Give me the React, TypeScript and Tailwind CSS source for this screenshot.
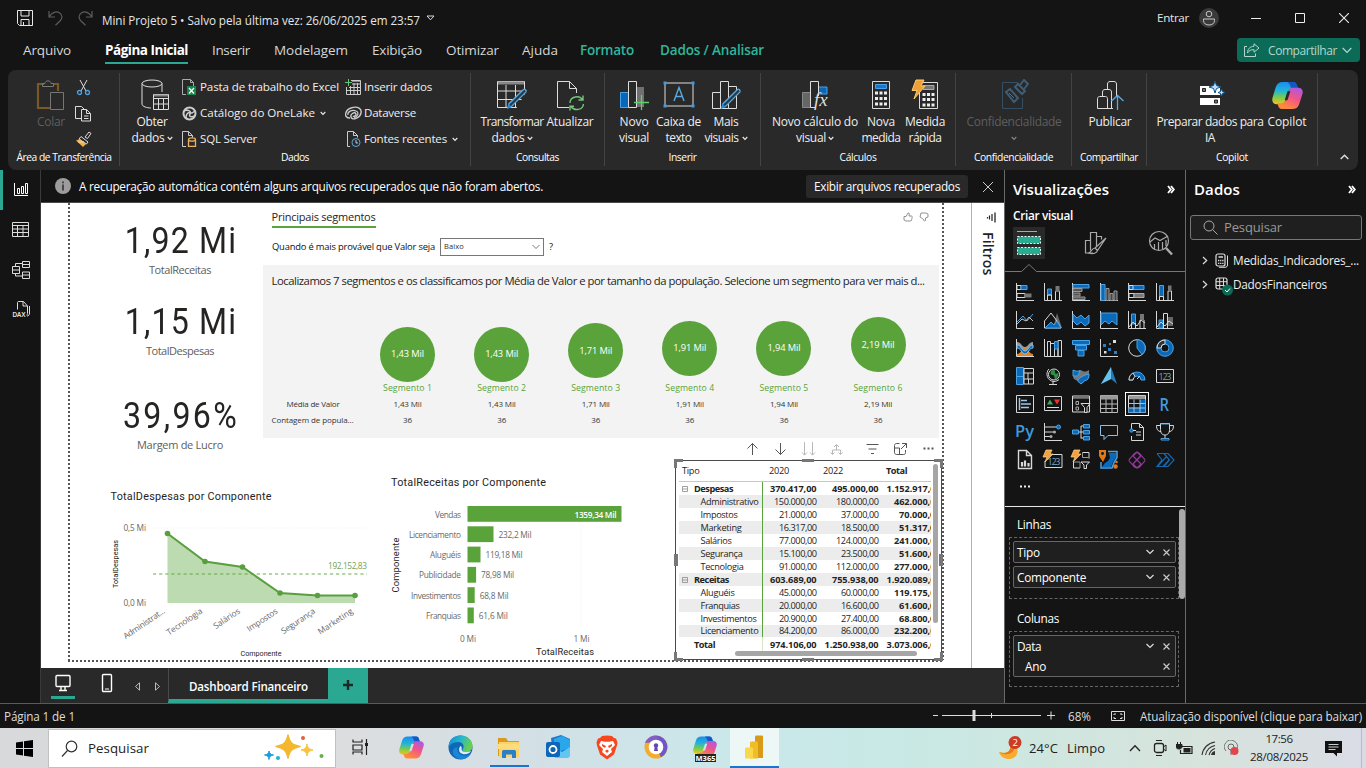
import { useLayoutEffect, useRef, useState } from "react";
import type { ReactNode } from "react";

type TProps = { w: number; className?: string; children: string };

/* Single line of text, tracked so that it fills the given width. */
function T({ w, className = "", children }: TProps) {
  const ref = useRef<HTMLSpanElement>(null);
  const [ls, setLs] = useState(0);
  useLayoutEffect(() => {
    const el = ref.current;
    if (!el) return;
    const prev = el.style.letterSpacing;
    el.style.letterSpacing = "0px";
    const natural = parseFloat(getComputedStyle(el).width);
    el.style.letterSpacing = prev;
    setLs((w - natural) / children.length);
  }, [w, children]);
  return (
    <span ref={ref} style={{ letterSpacing: ls }} className={`inline-block w-max shrink-0 whitespace-nowrap ${className}`}>
      {children}
    </span>
  );
}

function Svg({ w, h, className = "", children }: { w: number; h: number; className?: string; children: ReactNode }) {
  return (
    <svg width={w} height={h} viewBox={`0 0 ${w} ${h}`} fill="none" className={`shrink-0 ${className}`}>
      {children}
    </svg>
  );
}

function Chevron({ className = "" }: { className?: string }) {
  return (
    <Svg w={6} h={5} className={className}>
      <path d="M.7 1 3 3.4 5.3 1" stroke="currentColor" strokeWidth="1.1" />
    </Svg>
  );
}

/* ---------- title bar and menu ---------- */

function TitleBar() {
  return (
    <div className="flex h-[35px] shrink-0 items-center text-[#e6e6e6]">
      <Svg w={16} h={16} className="ml-[17px]">
        <path d="M.5.5h15v15h-13l-2-2zM4 .5v5.500h8v-5.500M4 15.500v-6h8v6M6.500 15v-3" stroke="#e8e8e8" />
      </Svg>
      <Svg w={16} h={16} className="ml-[15px]">
        <path d="M1 1v6h6M1.300 6.500C4 2.500 8 .8 11 2.500c4 2.500 3.500 6 1 8.500l-4.500 4.300" stroke="#5c5c5c" strokeWidth="1.200" />
      </Svg>
      <Svg w={16} h={16} className="ml-[13px]">
        <path d="M15 1v6H9M14.700 6.500C12 2.500 8 .8 5 2.500c-4 2.500-3.500 6-1 8.500l4.500 4.300" stroke="#5c5c5c" strokeWidth="1.200" />
      </Svg>
      <T w={318} className="mt-[6px] ml-[9px] text-[11.7px]">Mini Projeto 5 • Salvo pela última vez: 26/06/2025 em 23:57</T>
      <Svg w={9} h={6} className="ml-[6px]">
        <path d="M1 1h7L4.500 4.800z" stroke="#d8d8d8" />
      </Svg>
      <div className="ml-auto flex items-center">
        <T w={32} className="text-[11.6px]">Entrar</T>
        <div className="ml-[10px] flex size-[20px] items-center justify-center rounded-full bg-[#3a3a3a]">
          <Svg w={14} h={16}>
            <circle cx="7" cy="4" r="2.800" stroke="#c8c8c8" />
            <path d="M1.500 9h11v1.500c0 3-2.500 4.500-5.500 4.500s-5.500-1.500-5.500-4.500z" stroke="#c8c8c8" />
          </Svg>
        </div>
        <Svg w={10} h={10} className="ml-[32px]"><path d="M0 5.500h10" stroke="#eee" /></Svg>
        <Svg w={10} h={10} className="ml-[34px]"><path d="M.5.5h9v9h-9z" stroke="#eee" /></Svg>
        <Svg w={10} h={10} className="mr-[17px] ml-[34px]"><path d="m0 0 10 10M10 0 0 10" stroke="#eee" strokeWidth="1.100" /></Svg>
      </div>
    </div>
  );
}

function MenuBar() {
  return (
    <div className="flex h-[35px] shrink-0 items-start text-[13.5px] leading-[30px] text-[#d6d6d6]">
      <T w={48} className="ml-[23px]">Arquivo</T>
      <div className="ml-[34px] flex h-[29px] border-b-2 border-[#2ba892] font-bold text-white">
        <T w={83}>Página Inicial</T>
      </div>
      <T w={38} className="ml-[24px]">Inserir</T>
      <T w={74} className="ml-[24px]">Modelagem</T>
      <T w={50} className="ml-[24px]">Exibição</T>
      <T w={53} className="ml-[24px]">Otimizar</T>
      <T w={36} className="ml-[23px]">Ajuda</T>
      <T w={54} className="ml-[22px] font-semibold text-[#2fb79b]">Formato</T>
      <T w={104} className="ml-[26px] font-semibold text-[#2fb79b]">Dados / Analisar</T>
      <div className="mt-[3px] mr-[6px] ml-auto flex h-[24px] w-[123px] items-center rounded-[4px] bg-[#0b6b56] text-[#b5d6cc]">
        <Svg w={16} h={14} className="ml-[7px]">
          <path d="M3 3.500H.5v10h11v-3" stroke="currentColor" />
          <path d="M10 .8 15 5l-5 4.200V6.700C7 6.500 5 7.500 3.500 10 3.500 6 6 3.500 10 3.300z" stroke="currentColor" />
        </Svg>
        <T w={69} className="mt-[2px] ml-[8px] text-[12px]">Compartilhar</T>
        <Svg w={10} h={7} className="ml-[5px]"><path d="m.7 1 4.300 4.300L9.300 1" stroke="currentColor" strokeWidth="1.200" /></Svg>
      </div>
    </div>
  );
}

/* ---------- ribbon ---------- */

function RibbonGroup({ label, labelW, className, children }: { label: string; labelW: number; className: string; children: ReactNode }) {
  return (
    <div className={`flex h-[100px] shrink-0 flex-col pt-[3px] ${className}`}>
      <div className="relative flex h-[93px] flex-col border-r border-[#434343]">
        <div className="flex h-[76px]">{children}</div>
        <div className="flex h-[17px] items-center justify-center pt-px text-[10.3px] font-medium text-white">
          <T w={labelW}>{label}</T>
        </div>
      </div>
    </div>
  );
}

function Big({ icon, lines, className }: { icon: ReactNode; lines: ReactNode; className: string }) {
  return (
    <div className={`flex shrink-0 flex-col items-center ${className}`}>
      <div className="flex h-[41px] shrink-0 items-center justify-center pt-[3px]">{icon}</div>
      <div className="flex flex-col items-center text-[12px] leading-[16px] font-medium text-[#eee]">{lines}</div>
    </div>
  );
}

function Small({ icon, text, w, arrow }: { icon: ReactNode; text: string; w: number; arrow?: boolean }) {
  return (
    <div className="flex h-[26px] shrink-0 items-center text-[11.6px] font-medium text-[#eee]">
      <div className="mr-[3px] flex w-[16px] justify-center">{icon}</div>
      <T w={w}>{text}</T>
      {arrow && <Chevron className="ml-[5px]" />}
    </div>
  );
}

const pencil = (
  <g>
    <path d="M27.500 9.500c1.200-1 3.400 1 2.300 2.600L15.500 26.500l-3.500 1 1-3.800z" fill="#263a4b" stroke="#5aa9e0" strokeWidth="1.300" />
    <path d="m11 29 1.500-5 3.500 3z" fill="#1f8ae0" />
    <path d="m15 23 11-11" stroke="#1c6db0" />
  </g>
);

function CopilotIcon({ size, id }: { size: number; id: string }) {
  return (
    <svg width={size} height={size} viewBox="0 0 32 32" fill="none" className="shrink-0">
      <defs>
        <linearGradient id={`${id}a`} x1="8" y1="2" x2="7" y2="25" gradientUnits="userSpaceOnUse">
          <stop stopColor="#1a8cf0" /><stop offset=".4" stopColor="#22b6d6" /><stop offset=".7" stopColor="#7ccb4b" /><stop offset="1" stopColor="#f3c51f" />
        </linearGradient>
        <linearGradient id={`${id}b`} x1="28" y1="7" x2="18" y2="30" gradientUnits="userSpaceOnUse">
          <stop stopColor="#a45bea" /><stop offset=".5" stopColor="#f0538d" /><stop offset="1" stopColor="#ff8a3c" />
        </linearGradient>
        <mask id={`${id}m`}>
          <path d="M0 0h32v32H0z" fill="#fff" />
          <path d="m13.300 20 2.700-8.500h3l-2.800 8.500c-.4 1.200-3.200 1.200-2.900 0z" fill="#000" />
        </mask>
      </defs>
      <g mask={`url(#${id}m)`}>
        <path d="M11 2h11c2.200 0 3 1.500 3.600 3.300L27 9h-6c-2.500 0-3.500 1-4.300 3.500L13.500 22c-.9 2.600-2 3-4 3H5c-4 0-5.500-3-4.400-7L4 7c1.200-3.500 3.500-5 7-5z" fill={`url(#${id}a)`} />
        <path d="M16 2h6c2.200 0 3 1.500 3.600 3.300L27 9h-7l-2-5z" fill="#1656c6" />
        <path d="M21 30H10c-2.200 0-3-1.500-3.600-3.300L5.500 24H9c3 0 4.500-1.500 5.300-4L17.500 11c.9-2.600 2-3 4-3H27c4 0 5.500 3 4.400 6.500L28 25c-1.200 3.500-3.500 5-7 5z" fill={`url(#${id}b)`} />
      </g>
    </svg>
  );
}

function Ribbon() {
  return (
    <div className="mx-[8px] flex h-[100px] shrink-0 rounded-[8px] bg-[#292929] pl-px">
      <RibbonGroup label="Área de Transferência" labelW={95} className="w-[111px]">
        <Big
          className="ml-[25px] w-[34px]"
          icon={
            <Svg w={30} h={32}>
              <path d="M8 5H2v24h12" stroke="#79592a" strokeWidth="2.200" /><path d="M17 5h5v7" stroke="#79592a" strokeWidth="2.200" />
              <path d="M6.500 7.500v-3H9C9 1 15 1 15 4.500h2.500v3z" stroke="#777" />
              <path d="M14.500 13.500h13v17h-13z" stroke="#777" fill="#292929" />
            </Svg>
          }
          lines={<T w={28} className="text-[#5e5e5e]">Colar</T>}
        />
        <div className="ml-[7px] flex flex-col gap-[9px] pt-[6px]">
          <Svg w={17} h={17}>
            <path d="M5 1l6 11M12 1 6 12" stroke="#ddd" /><circle cx="4.500" cy="13.500" r="2" stroke="#4aa0e0" strokeWidth="1.300" /><circle cx="12.500" cy="13.500" r="2" stroke="#4aa0e0" strokeWidth="1.300" />
          </Svg>
          <Svg w={17} h={17}>
            <path d="M6 13.500H.5v-12h6L9 4M6.500 4.500h5l4 4v7.500h-9zM11.500 4.500v4h4M9 11h4.500M9 13.500h4.500" stroke="#ddd" />
          </Svg>
          <Svg w={17} h={17}>
            <path d="m10 6 4-5 2 1.500-3.500 5z" stroke="#ddd" /><path d="m6 5.500 7 5.500-1.500 2-7.500-5z" stroke="#ddd" /><path d="M1 9.500 5 8l6 5-3 3z" fill="#edb04d" /><path d="M3 11h6" stroke="#fff" strokeWidth=".6" />
          </Svg>
        </div>
      </RibbonGroup>

      <RibbonGroup label="Dados" labelW={28} className="w-[351px]">
        <Big
          className="ml-[7px] w-[50px]"
          icon={
            <Svg w={28} h={32} className="ml-[6px]">
              <ellipse cx="11" cy="4.500" rx="10" ry="3.500" stroke="#ddd" /><path d="M1 4.500V25c0 2.500 5 4 9 4M21 4.500V13" stroke="#ddd" />
              <path d="M12.500 15.500h15v15h-15z" fill="#292929" stroke="#ddd" /><path d="M13 16.500h14" stroke="#888" strokeWidth="2" /><path d="M12.500 19.500h15M12.500 25h15M17.500 19v11.500M22.500 19v11.500" stroke="#ddd" />
            </Svg>
          }
          lines={<><T w={31}>Obter</T><span className="flex items-center"><T w={33}>dados</T><Chevron className="ml-[2px]" /></span></>}
        />
        <div className="ml-[4px] flex w-[164px] flex-col pt-px">
          <Small text="Pasta de trabalho do Excel" w={139} icon={<Svg w={16} h={16}><path d="M5 15.500H1.500V.5h8l3 3V8" stroke="#aaa" /><path d="M9.500.5v3h3" stroke="#aaa" /><path d="M6 7h9v9H6z" fill="#16874a" /><path d="m8 9 5 5.500M13 9l-5 5.500" stroke="#fff" strokeWidth="1.300" /></Svg>} />
          <Small text="Catálogo do OneLake" w={115} arrow icon={<Svg w={15} h={15}><circle cx="7.500" cy="7.500" r="6" stroke="#ccc" strokeWidth="2" /><path d="M2 5c3-2 8 0 6 3s3 4 5 1M5 13c-2-3 0-8 5-6l3-2" stroke="#ccc" strokeWidth="1.500" /></Svg>} />
          <Small text="SQL Server" w={57} icon={<Svg w={16} h={16}><path d="M5 15.500H1.500V.5h6l4 4v2" stroke="#ccc" /><path d="M7.500.5v4h4" stroke="#ccc" /><path d="M7.500 8.500v7h7v-7" stroke="#eeb15c" strokeWidth="1.300" /><ellipse cx="11" cy="8.500" rx="3.500" ry="1.700" stroke="#eeb15c" strokeWidth="1.200" /></Svg>} />
        </div>
        <div className="flex flex-col pt-px">
          <Small text="Inserir dados" w={68} icon={<Svg w={16} h={16}><path d="M6 1.500h9.500v14H1.500V8M1.500 11.500h14M5.500 7v8.500M9 4v11.500M12.500 4v11.500M7 5h8.500M4 8.500h11.500" stroke="#ccc" /><path d="M7 2.500h8" stroke="#888" /><path d="M3.500 0v7M0 3.500h7" stroke="#64c86a" /></Svg>} />
          <Small text="Dataverse" w={52} icon={<Svg w={17} h={15}><path d="M5 12C-2 12 0 4 6 2c7-2.500 11 1 10 5-1 5-9 8-10 4-1-3 4-6 5-3 .5 1.500-2 3-3 2" stroke="#ccc" strokeWidth="1.400" /><path d="M3 9c-1-3 4-6 8-4 4 1.500 1 6-2 7" stroke="#ccc" strokeWidth="1.200" /></Svg>} />
          <Small text="Fontes recentes" w={83} arrow icon={<Svg w={16} h={16}><path d="M5 15.500H2.500V.5h6l4 4v2" stroke="#ccc" /><path d="M8.500.5v4h4" stroke="#ccc" /><circle cx="11" cy="11.500" r="4" stroke="#5aa9e0" fill="#292929" /><path d="M11 9v3h2" stroke="#ccc" /></Svg>} />
        </div>
      </RibbonGroup>

      <RibbonGroup label="Consultas" labelW={43} className="w-[134px]">
        <Big
          className="ml-[3px] w-[76px]"
          icon={<Svg w={32} h={30}><path d="M1.500 1.500h27v26h-27zM1.500 11h27M1.500 19.500h27M10 5v22.500M19.500 5v22.500" stroke="#ddd" /><path d="M2 3h26" stroke="#888" strokeWidth="3" /><path d="M20 29h10V12z" fill="#292929" />{pencil}</Svg>}
          lines={<><T w={63}>Transformar</T><span className="flex items-center"><T w={33}>dados</T><Chevron className="ml-[2px]" /></span></>}
        />
        <Big
          className="ml-[-4px] w-[48px]"
          icon={<Svg w={30} h={32}><path d="M14 28.500H2.500v-26h12l7 7V14M14.500 2.500v7h7" stroke="#ddd" /><path d="M15 24c0-7 10-8 12.500-3M28 16.500V21h-4.500M28.500 25c-.5 6-9 7.500-12.500 2.500M15 31.500v-4.300h4" stroke="#72c878" strokeWidth="1.400" /></Svg>}
          lines={<T w={47}>Atualizar</T>}
        />
      </RibbonGroup>

      <RibbonGroup label="Inserir" labelW={28} className="w-[156px]">
        <Big
          className="ml-[7px] w-[44px]"
          icon={<Svg w={30} h={32}><path d="M1.500 13.500h8v15h-8z" fill="#0867b8" stroke="#48a0e8" /><path d="M16 8h9v20h-9z" fill="#707070" /><path d="M9.500 2.500h8v26h-8z" fill="#292929" stroke="#ddd" /><path d="M22.500 16v15M15 23.500h15" stroke="#5fd06b" strokeWidth="1.300" /></Svg>}
          lines={<><T w={29}>Novo</T><T w={30}>visual</T></>}
        />
        <Big
          className="w-[45px]"
          icon={<Svg w={32} h={30}><path d="M2 3h28v23H2z" stroke="#ddd" /><path d="M.5 1.500h3v3h-3zM28.500 1.500h3v3h-3zM.5 24.500h3v3h-3zM28.500 24.500h3v3h-3z" fill="#3d9be5" /><path d="m11 21 5-13.500L21 21M13 16.500h6" stroke="#5aa9e0" strokeWidth="1.400" /></Svg>}
          lines={<><T w={45}>Caixa de</T><T w={26}>texto</T></>}
        />
        <Big
          className="ml-[1px] w-[48px]"
          icon={<Svg w={32} h={30}><path d="M2.500 12.500h8v16h-8zM10.500 1.500h8v27h-8zM18.500 6.500h8v22h-8z" stroke="#ddd" />{pencil}</Svg>}
          lines={<><T w={25}>Mais</T><span className="flex items-center"><T w={34}>visuais</T><Chevron className="ml-[3px]" /></span></>}
        />
      </RibbonGroup>

      <RibbonGroup label="Cálculos" labelW={37} className="w-[195px]">
        <Big
          className="ml-[8px] w-[92px]"
          icon={<Svg w={30} h={32}><path d="M2.500 13.500h8v15h-8z" fill="#666" stroke="#888" /><path d="M18 8h9v7h-9z" fill="#0867b8" stroke="#48a0e8" /><path d="M10.500 2.500h8v26h-8z" fill="#292929" stroke="#ddd" /><path d="M15 17h14v14H15z" fill="#292929" /><text x="14" y="27" fontFamily="Liberation Serif, serif" fontStyle="italic" fontSize="19" fill="#ddd">fx</text></Svg>}
          lines={<><T w={86}>Novo cálculo do</T><span className="flex items-center"><T w={30}>visual</T><Chevron className="ml-[2px]" /></span></>}
        />
        <Big
          className="w-[40px]"
          icon={<Svg w={20} h={30}><path d="M1.500 1.500h17v27h-17z" stroke="#ddd" /><path d="M4.500 4.500h11v4h-11z" fill="#1479cf" stroke="#48a0e8" /><path d="M4 13h12M4 18.500h12M4 24h12" stroke="#eee" strokeWidth="3" strokeDasharray="3 1.500" /></Svg>}
          lines={<><T w={28}>Nova</T><T w={39}>medida</T></>}
        />
        <Big
          className="ml-[2px] w-[44px]"
          icon={<Svg w={28} h={32}><path d="M8.500 3.500h18v26h-18z" stroke="#ddd" /><path d="M12 6.500h11v4H12z" fill="#777" stroke="#aaa" /><path d="M11.500 15.500h12M11.500 20.500h12M11.500 26h12" stroke="#eee" strokeWidth="3" strokeDasharray="3 1.500" /><path d="M5 1h8l-3 6h4L3 20l3-8.500H1z" fill="#eda034" stroke="#ffc76f" /></Svg>}
          lines={<><T w={40}>Medida</T><T w={33}>rápida</T></>}
        />
      </RibbonGroup>

      <RibbonGroup label="Confidencialidade" labelW={79} className="w-[116px]">
        <Big
          className="ml-[9px] w-[98px]"
          icon={<Svg w={30} h={32}><path d="M19 3.500H3.500v26h20V19" stroke="#344f64" /><path d="m7 13 4-3 8 9-4 4zM16 8l3-3 7 7-3 3z" stroke="#3e5e77" strokeWidth="2" /><path d="m21 6 4-5 4 4-4 5" stroke="#3e5e77" strokeWidth="2" /><path d="m10 14 5 5" stroke="#58707f" /></Svg>}
          lines={<><T w={95} className="text-[#5e5e5e]">Confidencialidade</T><Chevron className="mt-[6px] text-[#888]" /></>}
        />
      </RibbonGroup>

      <RibbonGroup label="Compartilhar" labelW={58} className="w-[75px]">
        <Big
          className="ml-[14px] w-[48px]"
          icon={<Svg w={30} h={32}><path d="M12.500 10V5c0-1.500 1-2.500 2.500-2.500h4c1.500 0 2.500 1 2.500 2.500v13M7.500 18v-5c0-1.500 1-2.500 2.500-2.500h4c1.500 0 2.500 1 2.500 2.500v16M18 29.500H2.500v-10c0-1 1-2 2-2h6c1 0 2 1 2 2v10" stroke="#ddd" /><path d="M22.500 31V17.500M16.500 22l6-5.500 6 5.500" stroke="#5aa9e0" strokeWidth="1.300" /></Svg>}
          lines={<T w={43}>Publicar</T>}
        />
      </RibbonGroup>

      <RibbonGroup label="Copilot" labelW={32} className="w-[171px]">
        <Big
          className="ml-[9px] w-[108px]"
          icon={<Svg w={28} h={30} className="ml-[4px]"><path d="M2 6h20v9H2zM2 18h20v7H2z" fill="#fff" /><path d="M4.500 8.500h3v3h-3zM16.500 20h3v3h-3z" fill="#777" stroke="#222" /><path d="m17 1 1.500 4.500L23 7l-4.500 1.500L17 13l-1.500-4.500L11 7l4.500-1.500zM23.500 9l1 2.500 2.500 1-2.500 1-1 2.500-1-2.500-2.500-1 2.500-1z" fill="#b9ddfa" stroke="#0b5793" /></Svg>}
          lines={<><T w={107}>Preparar dados para</T><T w={10}>IA</T></>}
        />
        <Big className="ml-[2px] w-[42px]" icon={<CopilotIcon size={31} id="rb" />} lines={<T w={39}>Copilot</T>} />
      </RibbonGroup>
      <div className="flex flex-1 items-end justify-center pb-[10px] pl-[13px]">
        <Svg w={9} h={6}><path d="m.7 5 3.800-3.800L8.300 5" stroke="#ddd" strokeWidth="1.500" /></Svg>
      </div>
    </div>
  );
}

/* ---------- report canvas ---------- */

function Rail() {
  return (
    <div className="flex w-[41px] shrink-0 border-r border-[#3a3a3a]">
      <div className="h-[40px] w-[3px] bg-[#2ba892]" />
      <div className="flex w-[35px] flex-col items-center pt-[11px]">
        <Svg w={16} h={18}><path d="M1.500 2v12.500H15M4.500 7.500h2v5h-2zM8.500 5.500h2v7h-2zM12.500 2.500h2v10h-2z" stroke="#fff" /></Svg>
        <Svg w={17} h={17} className="mt-[22px]"><path d="M.5 1.500h16v14H.5zM.5 4.500h16M.5 8h16M.5 11.500h16M5.500 4.500v11M11 4.500v11" stroke="#ddd" /></Svg>
        <Svg w={20} h={20} className="mt-[22px]"><path d="M1.500 6.500h7v7h-7zM1.500 10h7M11.500 1.500h7v6h-7zM11.500 4.500h7M11.500 12h7v6.500h-7zM11.500 15h7M4.500 6V3.500h7M4.500 13.500v2.500h7" stroke="#ddd" /></Svg>
        <Svg w={20} h={20} className="mt-[20px]">
          <path d="M6.500 9.500v-7c0-.6.5-1 1-1h5l4 4.500v7.500c0 1-.6 1.500-1 1.500M12 1.500V6h4M18.500 6v7c0 2-1 3-2.500 3" stroke="#ddd" /><text x="1.500" y="16.500" fontSize="6.500" fontWeight="700" fontFamily="Liberation Sans, sans-serif" fill="#ddd" textLength="13">DAX</text>
        </Svg>
      </div>
    </div>
  );
}

function Notice() {
  return (
    <div className="flex h-[33px] shrink-0 items-center border-b border-[#4a4a4a] text-[11.8px] text-white">
      <Svg w={16} h={16} className="ml-[14px]"><circle cx="8" cy="8" r="8" fill="#9c9c9c" /><path d="M8 3.500v1.700M8 6.500v6" stroke="#333" strokeWidth="1.600" /></Svg>
      <T w={464} className="mt-[2px] ml-[8px]">A recuperação automática contém alguns arquivos recuperados que não foram abertos.</T>
      <div className="mr-[15px] ml-auto flex h-[23px] w-[162px] items-center justify-center rounded-[3px] bg-[#292929] pt-px"><T w={146}>Exibir arquivos recuperados</T></div>
      <Svg w={10} h={10} className="mt-[2px] mr-[11px]"><path d="m0 0 10 10M10 0 0 10" stroke="#ccc" /></Svg>
    </div>
  );
}

function Card({ value, w, label, labelW, className }: { value: string; w: number; label: string; labelW: number; className: string }) {
  return (
    <div className={`absolute flex w-[140px] flex-col items-center ${className}`}>
      <div className="scale-x-[0.88]"><T w={w} className="font-[Roboto] text-[36.5px] leading-[40px] text-[#252423]">{value}</T></div>
      <T w={labelW} className="mt-px mr-[2px] text-[11px] leading-[15px] text-[#605e5c]">{label}</T>
    </div>
  );
}

const segments = [
  { n: 1, v: "1,43 Mil", pad: "pt-[28.5px]" },
  { n: 2, v: "1,43 Mil", pad: "pt-[28.5px]" },
  { n: 3, v: "1,71 Mil", pad: "pt-[25px]" },
  { n: 4, v: "1,91 Mil", pad: "pt-[22.5px]" },
  { n: 5, v: "1,94 Mil", pad: "pt-[22.5px]" },
  { n: 6, v: "2,19 Mil", pad: "pt-[19px]" },
];

function Influencers() {
  return (
    <div className="absolute top-[4px] left-[222px] w-[676px]">
      <div className="flex h-[21px] items-start justify-between pr-[10px] pl-[8.5px]">
        <div className="border-b-2 border-[#5aa33a] text-[11px] leading-[19px] text-[#252423]"><T w={104}>Principais segmentos</T></div>
        <div className="flex gap-[6px] pt-[5px] text-[#777]">
          <Svg w={10} h={10}><path d="M1 4.500h2L5 1c1.500-.5 1.500 1 1 3h2.500c1 0 .7 1 0 4.500L7 9H3L1 8z" stroke="currentColor" strokeWidth=".8" /></Svg>
          <Svg w={10} h={10}><path d="M2 1h5l2 1v3L6.500 6v2.500c-.8 1-1.500.5-1.500-.5L2 5.500 1 5z" stroke="currentColor" strokeWidth=".8" /></Svg>
        </div>
      </div>
      <div className="mt-[9px] flex h-[20px] items-center pl-[9px] text-[9.400px] text-[#111]">
        <T w={163} className="mt-px">Quando é mais provável que Valor seja</T>
        <div className="ml-[5px] flex h-[18px] w-[104px] items-center justify-between border border-[#777] px-[3px] text-[7.500px] text-[#333]">
          <T w={20}>Baixo</T>
          <Svg w={8} h={6}><path d="m.5 1 3.500 3.500L7.500 1" stroke="#555" strokeWidth=".8" /></Svg>
        </div>
        <span className="mt-px ml-[5px]">?</span>
      </div>
      <div className="mt-[8px] h-[173px] w-[676px] bg-[#f3f3f3] pt-[8px] pl-[8.5px] text-[11.300px] leading-[16px] text-[#252423]">
        <T w={653}>Localizamos 7 segmentos e os classificamos por Média de Valor e por tamanho da população. Selecione um segmento para ver mais d...</T>
        <div className="flex pt-[9px]">
          <div className="flex w-[89px] flex-col pt-[98px] text-[8px] leading-[16px] text-[#333]">
            <T w={53} className="ml-[15px]">Média de Valor</T>
            <T w={82}>Contagem de popula...</T>
          </div>
          {segments.map((s) => (
            <div key={s.n} className="flex w-[94.100px] shrink-0 flex-col items-center">
              <div className={`h-[83px] ${s.pad}`}>
                <div className="flex size-[55px] items-center justify-center rounded-full bg-[#5aa33a] text-[9.300px] text-white"><T w={33}>{s.v}</T></div>
              </div>
              <div className="text-[8.700px] leading-[14px] text-[#5aa33a]"><T w={49}>{`Segmento ${s.n}`}</T></div>
              <div className="mt-px text-[8px] leading-[16px] text-[#333]"><T w={28}>{s.v}</T></div>
              <div className="text-[8px] leading-[16px] text-[#333]"><T w={9}>36</T></div>
            </div>
          ))}
        </div>
      </div>
    </div>
  );
}

const areaPts = [[167.5, 533.5], [205, 561.5], [242.5, 567], [280, 593], [317.5, 595.5], [355, 595.5]];
const areaLabels: [string, number][] = [["Administrat...", 48], ["Tecnologia", 41], ["Salários", 30], ["Impostos", 35], ["Segurança", 39], ["Marketing", 40]];

function AreaChart() {
  const line = areaPts.map((p) => p.join(",")).join(" ");
  return (
    <svg width="270" height="180" viewBox="105 485 270 180" className="absolute top-[282px] left-[64px]" fontFamily="Open Sans, sans-serif">
      <text x="110.500" y="500" fontSize="10.800" fill="#252423" fontFamily="Roboto, sans-serif" textLength="161">TotalDespesas por Componente</text>
      <g fontSize="8.300" fill="#6b6967">
        <text x="123.500" y="531" textLength="22.500">0,5 Mi</text>
        <text x="123.500" y="606" textLength="22.500">0,0 Mi</text>
        {areaLabels.map(([s, len], i) => (
          <text key={s} textAnchor="end" textLength={len} transform={`translate(${165.5 + i * 37.600} 612.500) rotate(-34)`}>{s}</text>
        ))}
      </g>
      <path d="M152 528H367" stroke="#f0f0f0" strokeDasharray="1 2" />
      <polygon points={`167.500,603 ${line} 355,603`} fill="#bddbb0" />
      <path d="M153 574H367" stroke="#5aa33a" strokeOpacity=".6" strokeWidth="1.700" strokeDasharray="3.200 2.900" />
      <polyline points={line} stroke="#5a9f3e" strokeWidth="2" fill="none" />
      {areaPts.map(([x, y]) => <circle key={x} cx={x} cy={y} r="2.800" fill="#5a9f3e" />)}
      <text x="328" y="569" fontSize="8.300" fill="#71a25b" textLength="39">192.152,83</text>
      <g fontSize="7.200" fill="#252423" fontFamily="Roboto, sans-serif">
        <text x="240.500" y="656" textLength="41">Componente</text>
        <text transform="translate(117.500 588) rotate(-90)" textLength="48">TotalDespesas</text>
      </g>
    </svg>
  );
}

const bars: [string, string, number, number, number][] = [
  ["Vendas", "1359,34 Mil", 154, 26, 42],
  ["Licenciamento", "232,2 Mil", 26, 52, 33],
  ["Aluguéis", "119,18 Mil", 13, 31, 37],
  ["Publicidade", "78,98 Mil", 8.6, 42, 33],
  ["Investimentos", "68,8 Mil", 7.2, 50, 29],
  ["Franquias", "61,6 Mil", 6.3, 35, 29],
];

function BarChart() {
  return (
    <svg width="260" height="190" viewBox="385 472 260 190" className="absolute top-[269px] left-[344px]" fontFamily="Open Sans, sans-serif">
      <text x="391" y="486" fontSize="10.800" fill="#252423" fontFamily="Roboto, sans-serif" textLength="155">TotalReceitas por Componente</text>
      <path d="M581 504v122" stroke="#f8f8f8" />
      {bars.map(([name, v, w, lw, vw], i) => {
        const y = 506 + i * 20.300;
        return (
          <g key={name} fontSize="8.300" fill="#6b6967">
            <text x={461 - lw} y={y + 11.500} textLength={lw}>{name}</text>
            <rect x="467.500" y={y} width={w} height="15.800" fill="#5aa33a" />
            {i === 0 ? (
              <text x="574.500" y={y + 11.500} textLength={vw} fill="#fff" fontWeight="600">{v}</text>
            ) : (
              <text x={467.500 + w + 5} y={y + 11.500} textLength={vw}>{v}</text>
            )}
          </g>
        );
      })}
      <g fontSize="8.300" fill="#6b6967">
        <text x="460" y="642" textLength="16">0 Mi</text>
        <text x="573.500" y="642" textLength="16">1 Mi</text>
      </g>
      <g fontSize="9.300" fill="#252423" fontFamily="Roboto, sans-serif">
        <text x="536" y="655" textLength="58">TotalReceitas</text>
        <text transform="translate(399 592.500) rotate(-90)" textLength="55">Componente</text>
      </g>
    </svg>
  );
}

type Row = { name: string; nw: number; a: string; b: string; c: string; bold?: boolean; group?: boolean; shade?: boolean };
const rows: Row[] = [
  { name: "Despesas", nw: 39, a: "370.417,00", b: "495.000,00", c: "1.152.917,00", bold: true, group: true },
  { name: "Administrativo", nw: 58, a: "150.000,00", b: "180.000,00", c: "462.000,00", shade: true },
  { name: "Impostos", nw: 37, a: "21.000,00", b: "37.000,00", c: "70.000,00" },
  { name: "Marketing", nw: 41, a: "16.317,00", b: "18.500,00", c: "51.317,00", shade: true },
  { name: "Salários", nw: 31, a: "77.000,00", b: "124.000,00", c: "241.000,00" },
  { name: "Segurança", nw: 42, a: "15.100,00", b: "23.500,00", c: "51.600,00", shade: true },
  { name: "Tecnologia", nw: 43, a: "91.000,00", b: "112.000,00", c: "277.000,00" },
  { name: "Receitas", nw: 35, a: "603.689,00", b: "755.938,00", c: "1.920.089,00", bold: true, group: true, shade: true },
  { name: "Aluguéis", nw: 34, a: "45.000,00", b: "60.000,00", c: "119.175,00" },
  { name: "Franquias", nw: 39, a: "20.000,00", b: "16.600,00", c: "61.600,00", shade: true },
  { name: "Investimentos", nw: 56, a: "20.900,00", b: "27.400,00", c: "68.800,00" },
  { name: "Licenciamento", nw: 58, a: "84.200,00", b: "86.000,00", c: "232.200,00", shade: true },
  { name: "Total", nw: 21, a: "974.106,00", b: "1.250.938,00", c: "3.073.006,00", bold: true },
];

function numWidth(s: string, bold?: boolean) {
  return (s.length === 9 ? 37.5 : s.length === 10 ? 42.5 : 50) + (bold ? 4 : 0);
}

function Matrix() {
  return (
    <div className="absolute top-[257px] left-[634px] h-[200px] w-[267px] border-[1.500px] border-[#4a4a4a] bg-white text-[9.200px] text-[#252423]">
      <div className="flex w-[255px] flex-col overflow-hidden pl-[3px]">
        <div className="flex h-[21px] w-[252px] items-center border-b border-[#b7d7a8]">
          <T w={17.5} className="ml-[3px]">Tipo</T>
          <T w={20} className="ml-[69.500px]">2020</T>
          <T w={20} className="ml-[34px]">2022</T>
          <T w={21} className="ml-[43px] font-bold">Total</T>
        </div>
        {rows.map((r) => (
          <div key={r.name} className={`flex w-[252px] items-center overflow-hidden ${r.name === "Total" ? "h-[15px]" : r.name === "Licenciamento" ? "h-[12px]" : "h-[13px]"} ${r.shade ? "bg-[#ececec]" : ""} ${r.bold ? "font-bold" : ""}`}>
            <div className={`flex h-full w-[84px] shrink-0 items-center border-r ${r.name === "Total" ? "border-[#d5e6cc]" : "border-[#5aa33a]"}`}>
              {r.group ? (
                <Svg w={6} h={6} className="mr-[6px] ml-[3px]"><path d="M.5.5h5v5h-5zM1 3h4" stroke="#888" strokeWidth=".8" /></Svg>
              ) : (
                <span className={r.bold ? "w-[15px]" : "w-[21.500px]"} />
              )}
              <T w={r.nw}>{r.name}</T>
            </div>
            <div className="flex w-[53.500px] shrink-0 justify-end"><T w={numWidth(r.a, r.bold)}>{r.a}</T></div>
            <div className="flex w-[62px] shrink-0 justify-end"><T w={numWidth(r.b, r.bold)}>{r.b}</T></div>
            <div className="flex w-[62px] shrink-0 justify-end font-bold"><T w={numWidth(r.c, true)}>{r.c}</T></div>
          </div>
        ))}
      </div>
      <div className="absolute top-[3px] right-[3px] h-[159px] w-[5px] rounded-full bg-[#a6a6a6]" />
      <div className="absolute bottom-[3px] left-[59px] h-[5px] w-[182px] rounded-full bg-[#a6a6a6]" />
      <div className="absolute -top-[2px] -left-[2px] size-[9px] border-t-[3px] border-l-[3px] border-[#777]" />
      <div className="absolute -top-[2px] -right-[2px] size-[9px] border-t-[3px] border-r-[3px] border-[#777]" />
      <div className="absolute -bottom-[2px] -left-[2px] size-[9px] border-b-[3px] border-l-[3px] border-[#777]" />
      <div className="absolute -right-[2px] -bottom-[2px] size-[9px] border-r-[3px] border-b-[3px] border-[#777]" />
      <div className="absolute -top-[2px] left-[126px] h-[3px] w-[12px] bg-[#777]" />
      <div className="absolute -bottom-[2px] left-[126px] h-[3px] w-[12px] bg-[#777]" />
      <div className="absolute top-[93px] -left-[2px] h-[12px] w-[4px] bg-[#777]" />
      <div className="absolute top-[93px] -right-[2px] h-[12px] w-[4px] bg-[#777]" />
    </div>
  );
}

function VisualTools() {
  return (
    <div className="absolute top-[239px] left-[705px] text-[#555]">
      <Svg w={190} h={14}>
        <path d="M6.500 13V1.500M1.500 6.500l5-5 5 5M34.500 1v11.500M29.500 7.500l5 5 5-5" stroke="currentColor" />
        <path d="M58.500 0v13M56 10.500l2.500 2.700L61 10.500M66.500 0v13M64 10.500l2.500 2.700 2.500-2.700" stroke="#b8b8b8" />
        <path d="M86.500 12V8h8v4M90.500 8V3M88 5l2.500-2.500L93 5M84.500 10.500l2 2 2-2M92.500 10.500l2 2 2-2" stroke="#b8b8b8" />
        <path d="M120.500 2.500h12M122.500 7h8M125 11.500h3" stroke="currentColor" />
        <path d="M153.500 1.500h-3c-1 0-2 .7-2 2v7c0 1.300 1 2 2 2h7c1.500 0 2-.7 2-2V8M148.500 6h5v6M156 1.500h4.500V6M160.500 1.500l-5.500 5.500" stroke="currentColor" />
        <path d="M177.500 5.500h2v2h-2zM181.500 5.500h2v2h-2zM185.500 5.500h2v2h-2z" fill="currentColor" />
      </Svg>
    </div>
  );
}

function Canvas() {
  return (
    <div className="flex h-[465px] shrink-0 bg-white">
      <div className="relative w-[930px] shrink-0 overflow-hidden">
        <div className="absolute top-0 left-[27px] h-[458px] w-[2px] bg-[repeating-linear-gradient(180deg,#555_0_2px,#fff_2px_4px)]" />
        <div className="absolute top-0 left-[901px] h-[458px] w-[2px] bg-[repeating-linear-gradient(180deg,#555_0_2px,#fff_2px_4px)]" />
        <div className="absolute top-[457px] left-[27px] h-[2px] w-[876px] bg-[repeating-linear-gradient(90deg,#555_0_2px,#fff_2px_4px)]" />
        <Card className="top-[18px] left-[70px]" value="1,92 Mi" w={128} label="TotalReceitas" labelW={62} />
        <Card className="top-[99px] left-[70px]" value="1,15 Mi" w={128} label="TotalDespesas" labelW={68} />
        <Card className="top-[193px] left-[70px]" value="39,96%" w={132} label="Margem de Lucro" labelW={86} />
        <Influencers />
        <AreaChart />
        <BarChart />
        <VisualTools />
        <Matrix />
      </div>
      <div className="flex flex-1 flex-col items-center border-l border-[#b0b0b0] pt-[9px] pr-px">
        <Svg w={10} h={11} className="ml-[7px]"><path d="M9 .5v10" stroke="#222" strokeWidth="1.300" /><path d="M6 2v7M3.500 3.500v4M1.500 5v1.500" stroke="#222" strokeWidth="1.200" /></Svg>
        <div className="mt-[9px] text-[14px] leading-[20px] font-semibold text-[#222] [writing-mode:vertical-rl]"><span className="tracking-[0.200px]">Filtros</span></div>
      </div>
    </div>
  );
}

function PageTabs() {
  return (
    <div className="flex h-[35px] shrink-0 bg-[#292929]">
      <div className="mb-[4px] ml-[10px] flex w-[24px] flex-col items-center justify-end border-b-[3px] border-[#2ba892] pb-[4px]">
        <Svg w={16} h={18}><path d="M2 1.500h12c.6 0 1 .4 1 1v9c0 .6-.4 1-1 1H2c-.6 0-1-.4-1-1v-9c0-.6.4-1 1-1zM6 13v3M10 13v3M4 16.500h8" stroke="#fff" strokeWidth="1.400" /></Svg>
      </div>
      <Svg w={12} h={20} className="mt-[5px] ml-[26px]"><rect x="1.500" y="1.500" width="9" height="17" rx="1" stroke="#fff" strokeWidth="1.400" /><path d="M4 16h4" stroke="#fff" /></Svg>
      <Svg w={26} h={9} className="mt-[14px] ml-[21px]"><path d="M5.500.8v7.400L1.500 4.500zM21.500.8v7.400l4-3.700z" stroke="#ccc" strokeWidth=".9" /></Svg>
      <div className="ml-[8px] flex w-[160px] items-center justify-center border-b-4 border-l border-b-[#2ba892] border-l-[#4a4a4a] pt-[7px] text-[11.600px] font-semibold text-white"><T w={119}>Dashboard Financeiro</T></div>
      <div className="flex w-[40px] items-center justify-center bg-[#2ba892]"><Svg w={12} h={12} className="-mt-[2px]"><path d="M6 1v10M1 6h10" stroke="#1c2a27" strokeWidth="2.400" /></Svg></div>
    </div>
  );
}

/* ---------- visualizations pane ---------- */

const B = "#0a69b8";
const L = "#4ba3e3";
const W = "#d8d8d8";
const G = "#777";
const axis = <path d="M.5 0v17.500H18" stroke={W} />;
const vizIcons: ReactNode[] = [
  <>{axis}<path d="M1 2.500h4v4H1z" stroke={W} /><path d="M5 2.500h6v4H5z" fill={B} stroke={L} /><path d="M1 10.500h8v4H1z" stroke={W} /><path d="M8.500 10.500h7v4h-7z" fill={G} /></>,
  <>{axis}<path d="M3.500 6h4v6h-4z" fill={B} stroke={L} /><path d="M3.500 12h4v5M3.500 12v5M11.500 8h4v9M11.500 8v9" stroke={W} /><path d="M11.500 3h4v6h-4z" fill={G} /></>,
  <>{axis}<path d="M1 1.500h16v3.500H1z" fill={B} stroke={L} /><path d="M1 5.500h9v3H1zM1 10h7v3H1zM1 14h12v2.500H1z" fill="#555" stroke="#999" /></>,
  <>{axis}<path d="M1 1.500h4v16H1z" fill={B} stroke={L} /><path d="M6 5.500h3v12H6zM10 10.500h3v7h-3zM14 8h3v9.500h-3z" fill="#444" stroke="#999" /></>,
  <>{axis}<path d="M1 2.500h15v4H1z" fill={B} stroke={L} /><path d="M1 2.500h4v4H1zM1 10.500h5v4H1z" stroke={W} /><path d="M6 10.500h10v4H6z" fill={G} stroke="#aaa" /></>,
  <>{axis}<path d="M3.500 2.500h4v11h-4z" fill={B} stroke={L} /><path d="M3.500 13.500h4v4h-4zM12 8h3.500v9.500H12z" stroke={W} /><path d="M12 2.500h3.500V8H12z" fill={G} /></>,
  <>{axis}<path d="m1 11 6-6 4 5 6-7" stroke={L} /><path d="m1 13 5-5 4 2 3-4 4 4" stroke={W} strokeWidth=".9" /></>,
  <><path d="M13 2 9 17h9z" fill="#666" /><path d="M.5 17V10L7 2l6 8 4 7z" stroke={W} /><path d="m1 17 6-6 3 3 3-4 4 7z" fill={B} stroke={L} /></>,
  <>{axis}<path d="m1 3 4 4 4-3 4 4 4-4v8l-4 3-4-4-4 3-4-4z" fill={B} stroke={L} /></>,
  <>{axis}<path d="M1 2h16v12l-5-4-3 3-4-3-4 4z" fill={B} stroke={L} /></>,
  <>{axis}<path d="M3.500 3h4v10h-4z" fill={B} stroke={L} /><path d="M12 3h4v6h-4z" fill={G} /><path d="M3.500 12v5M7.500 12v5M12 9v8M16 9v8M1 16l4-5 4 4 4-6 4 3" stroke={W} /></>,
  <>{axis}<path d="M3 9h4v8H3z" fill={B} stroke={L} /><path d="M12 6h5v9h-5z" fill="#666" /><path d="M7.500 2.500h4v15h-4zM1 16l4-5 4 4 4-5 4 3" stroke={W} /></>,
  <>{axis}<path d="M1 3c4 0 5 5 8 5s4-5 8-5v4c-4 0-5 6-8 6s-4-6-8-6z" fill="#999" /><path d="M1 15c4 0 5-6 8-6s4 6 8 6v2H1z" fill="#e08525" /><path d="M1 6c4 0 5 6 8 6s4-6 8-6v3c-4 0-5 6-8 6s-4-6-8-6z" fill={B} stroke="#7cc3ee" /></>,
  <>{axis}<path d="M3.500 2.500h3v15h-3zM6.500 4.500h4v13h-4zM14 1.500h3.500v16H14zM10.500 9h3.500v8.500h-3.500z" stroke={W} /><path d="M10.500 2.500H14V10h-3.500z" fill={B} stroke={L} /></>,
  <><path d="M.5 1.500h17v4H.5zM3.500 6.500h11V11h-11zM6 11.500h6V17H6z" fill={B} stroke={L} /></>,
  <>{axis}<path d="M3 5h3v3H3zM8 9h3v3H8zM14 12h3v3h-3z" fill="#2c7fc4" /><path d="M13 1h3v3h-3zM4 12h2.500v2.500H4z" fill="#ddd" /><path d="M9 4h2v2H9z" fill={G} /></>,
  <><circle cx="9" cy="9" r="8.300" stroke={W} /><path d="M9 .7A8.300 8.300 0 0 1 14 15.500L9 9z" fill={B} stroke={L} /></>,
  <><circle cx="9" cy="9" r="6.300" stroke={B} strokeWidth="4" /><circle cx="9" cy="9" r="8.300" stroke={L} /><circle cx="9" cy="9" r="4" stroke={L} /><path d="M1 9a8 8 0 0 1 8-8v4a4 4 0 0 0-4 4z" fill="#333" stroke={W} /></>,
  <><path d="M.5.5h7v9h-7zM.5 9.500h7v8h-7z" fill={B} stroke={L} /><path d="M8 1.500h9.500V17H8zM8 6h9.500M12 6v6M8 12h9.500M12.500 12v5" stroke={W} /></>,
  <><circle cx="10" cy="7.500" r="5.500" stroke={W} /><path d="M7 4c2-2 5-1 4 1s2 2 3 1 0 5-2 6-1-4-3-4-3-1-2-4z" fill="#2e8f49" /><path d="M5 2C1 6 3 14 10 14.500c2 0 4-1 5-2M9 14.500V17M5 17.500h8" stroke={W} /></>,
  <><path d="M1 3c3 1.500 6 1.500 8 0 3 2.500 6 1.500 8 0v6c-.5 3-2 4.500-4 4.500L9 17l-4-3.500C2 13 1 11 1 9z" fill="#777" /><path d="M1 3c3 1.500 5 1.500 7 .5L6 9H1zM9 10l4-2 4-1v2c-.5 3-2 4.500-4 4.500L9 17l-3.500-3 1-2z" fill={B} stroke={L} /></>,
  <><path d="m11 0 6 17-6-5-10 5z" fill="#2779b8" /><path d="M11 0v12L1 17z" fill="#67c3ea" /></>,
  <><path d="M1 13a8 8 0 0 1 16 0h-4a4 4 0 0 0-8 0z" fill={B} stroke={L} /><path d="M1 13a8 8 0 0 1 4-7l2 3.500A4 4 0 0 0 5 13z" fill="#141414" stroke={W} /><path d="m9 12 3-3" stroke={W} /></>,
  <><path d="M.5 2.500h17v13H.5z" stroke={W} /><text x="2.500" y="12.500" fontSize="9" fill="#7a9fc0" textLength="13">123</text></>,
  <><path d="M.5.5h17v17H.5z" stroke={W} /><path d="M3.500 3v12M5 5.500h6M5 9h10M5 12.500h8" stroke="#9cc7ea" strokeWidth="1.500" /></>,
  <><path d="M.5 1.500h17v14H.5zM3 12.500h12" stroke={W} /><path d="m3 9.500 3-5 3 5z" fill="#40a65a" /><path d="m10 4.500 3 5 3-5z" fill="#e33" /></>,
  <><path d="M.5 1h17v16H.5z" stroke={W} /><path d="M1 2.500h16" stroke={G} strokeWidth="2.500" /><path d="M4 6.500h2.500v3H4zM4 12h2.500v3H4z" stroke="#aaa" /><path d="M9 8.500h9l-3 4v5h-2.500v-5z" fill="#141414" stroke={W} /></>,
  <><path d="M.5.5h17v17H.5zM.5 9h17M.5 13.500h17M6 4v13.500M12 4v13.500" stroke="#bbb" /><path d="M.5 2.500h17" stroke="#999" strokeWidth="4" /></>,
  <><path d="M.5.5h17v17H.5z" stroke="#ddd" /><path d="M1 2.500h16" stroke="#999" strokeWidth="3.500" /><path d="M12 4.500h5.500v13H.5v-5H12z" fill={B} /><path d="M.5 8.500h17M.5 13h17M6 4.500v13M12 4.500v13" stroke="#9ac5e8" /></>,
  <text x="3.500" y="15.500" fontSize="18" fontWeight="600" fill="#3f9ade" textLength="9.500" lengthAdjust="spacingAndGlyphs">R</text>,
  <text x="-1" y="14" fontSize="17" fontWeight="600" fill="#3f9ade" textLength="19" lengthAdjust="spacingAndGlyphs">Py</text>,
  <>{axis}<path d="M1 4h12M1 9h9M1 13.500h5" stroke={W} /><circle cx="14.500" cy="4" r="2" fill={B} stroke={L} /><circle cx="10.500" cy="9" r="1.500" fill="#aaa" /><circle cx="7" cy="13.500" r="1.500" fill="#aaa" /></>,
  <><path d="M6 9h3M9 3v12.500M9 3h3M9 15h3M9 9h3" stroke={W} /><path d="M.5 7h6v4h-6zM11.500 1.500h6v3.500h-6zM11.500 7.500h6V11h-6zM11.500 13.500h6V17h-6z" fill={B} stroke={L} /></>,
  <path d="M.5 2.500h17v10H8l-4 4v-4H.5z" stroke="#8cc0e8" />,
  <><path d="M3.500 6V.5h8l4 4v13h-12V13M11.500.5v4h4M8 9h5M8 12h5" stroke={W} /><circle cx="3.500" cy="7.500" r="1.700" fill={B} stroke={L} /><path d="M5 7.500h3" stroke={W} /></>,
  <><path d="M4.500.5h9v6c0 4-2 5.500-4.500 5.500S4.500 10.500 4.500 6.500zM4.500 2.500h-4c0 4 1.500 6 4.500 6M13.500 2.500h4c0 4-1.500 6-4.500 6M9 12v3" stroke={W} /><path d="M4.500 1h9M5 15.500h8V17H5z" stroke={L} /></>,
  <><path d="M2.500-.5h8l5 5v13h-13zM10.500-.5v5h5" stroke={W} strokeWidth="1.400" /><path d="M6 15.500V11M9 15.500V9.500M12.500 15.500V12" stroke={W} strokeWidth="2.200" /></>,
  <><path d="M4 3.500h14v13H1V10" stroke={W} /><text x="3.500" y="14" fontSize="9" fill="#6fa5cf" textLength="13">123</text><path d="M2-1h6L6 3h3L1 11l2-5H-1z" fill="#f2a13c" stroke="#ffd9a0" strokeWidth=".7" /></>,
  <><path d="M10.500 1.500H17v6M1.500 11v6H8M9 11h8.500l-3 3v3.500H12V14z" stroke={W} /><path d="M10.500 1.500v5h6M2 11h6v6" stroke="#999" /><path d="M2-1h6L6 3h3L1 11l2-5H-1z" fill="#f2a13c" stroke="#ffd9a0" strokeWidth=".7" /></>,
  <><path d="M8 .5h9v6l-3 5-2 5.500H1V11" stroke={L} strokeWidth="1.500" fill="#141414" /><path d="M9 2h7v4l-3 5-2 5H2l3-4 3-2 2-3z" fill={B} /><path d="M-1-1h7v6L3 11-1 5z" fill="#e17818" /><circle cx="2.500" cy="2.500" r="1.400" fill="#141414" /><circle cx="15.500" cy="15.500" r="2.300" fill="#e17818" /><circle cx="16.500" cy="11" r="1.300" fill="#e17818" /></>,
  <path d="M6.500 2.500 9 .8l2.500 1.700L16 7.500c1.500 1.500 1.500 2 0 3.500l-4.500 5L9 17.200 6.500 16 2 11C.5 9.500.5 9 2 7.500zM5 5l8 8M13 4.500 4.500 13.500M9 1l4 4-4 4-4-4zM9 9l4 4-4 4-4-4z" stroke="#93389c" strokeWidth="1.100" />,
  <path d="M1 2.500h11L18 9l-6 6.500H8L13.500 9 8 2.500M1 2.500 6 9l-5 6.500h6L13 9M11 5l-9 10" stroke="#1767ae" strokeWidth="1.200" />,
];

function Field({ name, w, indent, arrow }: { name: string; w: number; indent?: boolean; arrow?: boolean }) {
  return (
    <div className="flex h-[20px] items-center text-[11.800px] text-white">
      <T w={w} className={indent ? "mt-px ml-[11px]" : "mt-px ml-[3px]"}>{name}</T>
      <div className="mr-[5px] ml-auto flex items-center gap-[9px]">
        {arrow && <Svg w={8} h={6}><path d="m.5 1 3.500 3.500L7.500 1" stroke="#ddd" strokeWidth="1.200" /></Svg>}
        <Svg w={7} h={7}><path d="m.5.5 6 6M6.500.5l-6 6" stroke="#ccc" strokeWidth="1.100" /></Svg>
      </div>
    </div>
  );
}

function DoubleChevron({ className = "" }: { className?: string }) {
  return <Svg w={8} h={9} className={className}><path d="M1 1l2.800 3.500L1 8M4 1l2.800 3.500L4 8" stroke="#fff" strokeWidth="1.800" /></Svg>;
}

function VizPane() {
  return (
    <div className="relative flex w-[182px] shrink-0 flex-col border-x border-[#6a6a6a]">
      <div className="flex h-[38px] items-center pl-[8px] text-[15px] font-semibold text-white"><T w={96}>Visualizações</T><DoubleChevron className="mr-[10px] ml-auto" /></div>
      <div className="flex h-[16px] items-center pl-[8px] text-[11.800px] font-semibold text-white"><T w={60}>Criar visual</T></div>
      <div className="mt-[3px] flex h-[32px] items-center pl-[8px]">
        <div className="flex size-[32px] items-center justify-center bg-[#292929]">
          <Svg w={26} h={26}><path d="M1 1.500h20" stroke="#aaa" /><path d="M1.500 6.500h23v7h-23zM1.500 17.500h23v7h-23z" fill="#2bab90" stroke="#e8f5f2" strokeDasharray="2 1.500" /></Svg>
        </div>
        <Svg w={24} h={26} className="ml-[39px]"><path d="M9 23H1.500V10.500h5v10M6.500 20V2.500h6v14M12.500 6.500h5v3" stroke="#aaa" strokeWidth="1.200" /><path d="M22 8 11 18l2.500 2.500zM11 18c-3 0-3 3-6 5 4 1.500 8 0 8.500-2.500z" stroke="#aaa" strokeWidth="1.200" /></Svg>
        <Svg w={26} h={26} className="ml-[40px]"><circle cx="11" cy="11" r="9.500" stroke="#aaa" strokeWidth="1.200" /><path d="m2 12 5-4 5 2.500L20 6M6.500 19v-5M10.500 20v-8M14.500 19v-7M18 16v-6" stroke="#aaa" strokeWidth="1.200" /><path d="m18 18 6 6.500" stroke="#aaa" strokeWidth="2.500" /></Svg>
      </div>
      <Svg w={180} h={14} className="mt-[3px]"><path d="M0 9.500h16.500l7.500-7 7.500 7H180" stroke="#777" /></Svg>
      <div className="mt-[2px] ml-[6px] grid w-[168px] grid-cols-6 text-[12px]">
        {vizIcons.map((icon, i) => (
          <div key={i} className="flex h-[28px] items-center justify-center">
            <div className={`flex size-[24px] items-center justify-center ${i === 28 ? "border border-white" : ""}`}>
              <svg width="18" height="18" viewBox="0 0 18 18" fill="none" className="shrink-0 overflow-visible" fontFamily="Open Sans, sans-serif">{icon}</svg>
            </div>
          </div>
        ))}
      </div>
      <Svg w={12} h={3} className="mt-[11px] ml-[14px]"><path d="M1 .5h2v2H1zM5 .5h2v2H5zM9 .5h2v2H9z" fill="#eee" /></Svg>
      <div className="mt-[18px] flex flex-1 flex-col border-t border-[#e8e8e8] pt-[9px] text-[11.800px] text-white">
        <T w={34} className="ml-[12px] leading-[17px]">Linhas</T>
        <div className="mt-[4px] ml-[4px] flex h-[62px] w-[170px] flex-col gap-[3px] border border-dashed border-[#666] p-[3px]">
          <div className="h-[22px] w-[163px] rounded-[2px] border border-[#666] bg-[#1f1f1f]"><Field name="Tipo" w={23} arrow /></div>
          <div className="h-[22px] w-[163px] rounded-[2px] border border-[#666] bg-[#1f1f1f]"><Field name="Componente" w={69} arrow /></div>
        </div>
        <T w={42} className="mt-[11px] ml-[12px] leading-[17px]">Colunas</T>
        <div className="mt-[4px] ml-[4px] h-[56px] w-[170px] border border-dashed border-[#666] p-[3px]">
          <div className="h-[42px] w-[163px] rounded-[2px] border border-[#666] bg-[#1f1f1f]"><Field name="Data" w={24} arrow /><Field name="Ano" w={21} indent /></div>
        </div>
      </div>
      <div className="absolute right-0 bottom-[104px] h-[90px] w-[6px] rounded-full bg-[#aaa]" />
    </div>
  );
}

function DataPane() {
  return (
    <div className="flex flex-1 flex-col">
      <div className="flex h-[38px] items-center pl-[8px] text-[15px] font-semibold text-white"><T w={46}>Dados</T><DoubleChevron className="mr-[10px] ml-auto" /></div>
      <div className="mt-[7px] ml-[4px] flex h-[25px] w-[172px] items-center rounded-[3px] border border-[#777] bg-[#1f1f1f] text-[13px] text-[#999]">
        <Svg w={15} h={15} className="ml-[12px]"><circle cx="6" cy="6" r="5" stroke="#aaa" /><path d="m9.500 9.500 5 5" stroke="#aaa" /></Svg>
        <T w={58} className="ml-[6px]">Pesquisar</T>
      </div>
      <div className="mt-[8px] flex h-[24px] items-center pl-[16px] text-[11.800px] text-[#eee]">
        <Svg w={6} h={9}><path d="m1 1 3.700 3.500L1 8" stroke="#ddd" strokeWidth="1.200" /></Svg>
        <Svg w={14} h={15} className="ml-[7px]"><rect x="1" y="1" width="9" height="12" rx="2" stroke="#ddd" strokeWidth="1.200" /><path d="M12.500 2.500V12c0 1.500-1 2.300-2.500 2.300H4" stroke="#ddd" /><path d="M3.500 4h4.500" stroke="#ddd" strokeWidth="1.500" /><path d="M3 7.500h6M3 10.300h6" stroke="#ddd" strokeWidth="1.300" strokeDasharray="1.300 .8" /></Svg>
        <T w={126} className="mt-px ml-[4px]">Medidas_Indicadores_...</T>
      </div>
      <div className="flex h-[25px] items-center pl-[16px] text-[11.800px] text-[#eee]">
        <Svg w={6} h={9}><path d="m1 1 3.700 3.500L1 8" stroke="#ddd" strokeWidth="1.200" /></Svg>
        <Svg w={18} h={20} className="mt-[4px] ml-[7px]"><rect x="1" y="1" width="11" height="11" rx="2" stroke="#ddd" strokeWidth="1.200" /><path d="M1 4.700h11M1 8.500h11M4.700 1v11M8.500 1v11" stroke="#ddd" /><circle cx="12.500" cy="13" r="5.500" fill="#0b6b56" /><path d="m10 13 2 2 3-3.500" stroke="#fff" /></Svg>
        <T w={94}>DadosFinanceiros</T>
      </div>
    </div>
  );
}

/* ---------- bottom bars ---------- */

function StatusBar() {
  return (
    <div className="flex h-[25px] shrink-0 items-center border-t border-[#5a5a5a] text-[11.700px] text-[#ddd]">
      <T w={71} className="mt-px ml-[4px]">Página 1 de 1</T>
      <div className="ml-auto flex items-center">
        <Svg w={124} h={14}><path d="M1 6.500h5M10 6.500h99M59.500 4v5M115 6.500h8M119 2.500v8" stroke="#ddd" /><path d="M42 1v11" stroke="#ddd" strokeWidth="3" /></Svg>
        <T w={23} className="mt-px ml-[12px]">68%</T>
        <Svg w={14} h={12} className="ml-[20px]"><path d="M.5 1.500h13v9H.5zM3 5V4h2M3 7v1.500h2M11 5V4H9M11 7v1.500H9" stroke="#ddd" /></Svg>
        <T w={222} className="mt-px mr-[4px] ml-[15px]">Atualização disponível (clique para baixar)</T>
      </div>
    </div>
  );
}

function TaskIcon({ children, className = "" }: { children: ReactNode; className?: string }) {
  return <div className={`flex h-[40px] w-[49px] shrink-0 items-center justify-center border-b-2 ${className || "border-transparent"}`}>{children}</div>;
}

function Taskbar() {
  return (
    <div className="flex h-[40px] shrink-0 items-center bg-[linear-gradient(90deg,#d8d9db_0%,#dcdddf_25%,#d3dfe5_38%,#cbe7ea_52%,#c8e9e6_65%,#d0e6df_78%,#d7e3dd_88%,#d9dce5_100%)] text-[#222]">
      <Svg w={17} h={17} className="ml-[16px]"><path d="m0 2.400 7-1v6.600H0zM8 1.200 17 0v8H8zM0 9h7v6.600l-7-1zM8 9h9v8l-9-1.200z" fill="#000" /></Svg>
      <div className="ml-[15px] flex h-[39px] w-[288px] items-center border border-[#c0c0c0] bg-white text-[13.300px]">
        <Svg w={17} h={17} className="ml-[12px]"><circle cx="10.500" cy="6.500" r="5.300" stroke="#333" strokeWidth="1.200" /><path d="m6.500 10.500-5.500 6" stroke="#333" strokeWidth="1.200" /></Svg>
        <T w={61} className="mt-px ml-[10px]">Pesquisar</T>
        <Svg w={62} h={28} className="mr-[9px] ml-auto">
          <path d="M24 1c1.500 8 4 9.500 12 11.500-8 2-10.500 4-12 11.500-1.500-7.500-4-9.500-12-11.500 8-2 10.500-3.500 12-11.500z" fill="#f4b82e" stroke="#f4b82e" strokeWidth="1.500" strokeLinejoin="round" />
          <path d="M43 10c.8 4 2 5 6 6-4 1-5.200 2-6 6-.8-4-2-5-6-6 4-1 5.200-2 6-6z" fill="#f9c440" stroke="#f9c440" strokeLinejoin="round" />
          <path d="M5 17c.6 2.500 1.500 3.500 4.500 4-3 .6-4 1.500-4.500 4.500C4.500 22.500 3.500 21.500.5 21c3-.5 4-1.500 4.500-4z" fill="#1c9bdd" stroke="#1c9bdd" strokeLinejoin="round" /><circle cx="14" cy="24" r="2" fill="#1fb4c8" /><circle cx="39" cy="4" r="2" fill="#e0613b" /><circle cx="57.500" cy="22" r="2" fill="#67b146" />
        </Svg>
      </div>
      <TaskIcon><Svg w={17} h={16}><path d="M1 .5v2.500h9V.5M1 6h9v5H1zM1 15.500V13h9v2.500M14.500 0v16" stroke="#222" strokeWidth="1.200" /><path d="M13 4h3v3h-3z" fill="#222" /></Svg></TaskIcon>
      <div className="flex pl-[1.500px]">
        <TaskIcon><CopilotIcon size={25} id="t1" /></TaskIcon>
        <TaskIcon>
          <svg width="25" height="25" viewBox="0 0 25 25"><defs><linearGradient id="edge" x1="0" y1="0" x2="1" y2=".3"><stop stopColor="#1687d9" /><stop offset=".55" stopColor="#27b8ca" /><stop offset="1" stopColor="#6bcf4c" /></linearGradient></defs><circle cx="12.500" cy="12.500" r="12" fill="#0f68b6" /><path d="M.5 12C1 4 6 .5 12.500.5c7 0 12 5 12 10.500 0 4-3 6-7 6-3 0-3.500-1.500-2.500-3 2-4-1-7-4.500-7C5 7 1.500 10 .5 12z" fill="url(#edge)" /><path d="M9.500 12.500c-1 5 3 9 9 8 1.500-.3 3-1 4-1.700-3 6-12 8-17 1-2-5 1-8 4-7.300z" fill="#1b86d6" /><path d="M13 11c1.500 2 0 3.500 1 4.500 1.500 2 5 2 9 .5-2 3.500-8 4.500-11 1.500-1.500-2-1-6 1-6.500z" fill="#dcecf3" /></svg>
        </TaskIcon>
        <TaskIcon>
          <div className="flex h-[40px] w-[39px] shrink-0 items-center justify-center border-b-2 border-[#1677d2] pt-[2px]"><Svg w={22} h={22}><path d="M0 2h8l2 3h11v15H0z" fill="#d99a1d" /><path d="M1 6h20v15H1z" fill="#fbd367" /><path d="M0 8h22v5H0z" fill="#ffdc7a" /><path d="M4 22v-6c0-1.500 1-2 2-2h10c1 0 2 .5 2 2v6h-4v-3.500H8V22z" fill="#2a7fc9" /></Svg></div>
        </TaskIcon>
        <TaskIcon><Svg w={25} h={25}><path d="M5 3 15 0l9 4v15c0 2-1 3-3 3H7z" fill="#1a79cf" /><path d="M8 4l8-3 8 4v8l-16 5z" fill="#2aa7ea" /><path d="m7 12 9 5 8-5v8c0 2-1 3-3 3H9z" fill="#62c6f3" /><rect y="7" width="14" height="15" rx="2" fill="#0f65b8" /><circle cx="7" cy="14.500" r="3.500" stroke="#fff" strokeWidth="1.800" /></Svg></TaskIcon>
        <TaskIcon><Svg w={22} h={25}><path d="m6 1 5-.5L16 1l2 2 2 .5 1.500 4-.5 3-3 9-7 5-7-5-3-9-.5-3L2 3.500 4 3z" fill="#f6471f" /><path d="m5 6 4 .8h4L17 6l2 4-4 4 1 3-5 4-5-4 1-3-4-4z" fill="#fff" /><path d="m6 9 4 2-1 2-3-2zM16 9l-4 2 1 2 3-2zM9 16l2-1.500 2 1.500-2 2z" fill="#f6471f" /></Svg></TaskIcon>
        <TaskIcon><Svg w={24} h={24}><circle cx="12" cy="12" r="11.500" fill="#f2ac2e" /><path d="M12 .5A11.500 11.500 0 0 1 17 22.300L12 12z" fill="#6d57c9" /><path d="M1 8C3 3 7 .5 12 .5l3 3-9 4z" fill="#8060c7" /><circle cx="12" cy="12" r="7.300" fill="#fff" /><circle cx="12" cy="10.500" r="2.200" fill="#6048b0" /><path d="m11 11-1 5h4l-1-5z" fill="#6048b0" /></Svg></TaskIcon>
        <TaskIcon>
          <div className="relative"><CopilotIcon size={24} id="t2" /><span className="absolute -bottom-[3px] left-[2px] w-[21px] bg-[#222] text-center text-[7.500px] leading-[8px] font-bold text-white">M365</span></div>
        </TaskIcon>
        <TaskIcon className="border-[#1677d2] bg-[#edf7f5]"><Svg w={22} h={24}><path d="M12 2c0-1 .5-1.500 1.500-1.500h5c1 0 1.500.5 1.500 1.500v21h-8z" fill="#d99b16" /><path d="M7 8c0-1 .5-1.500 1.500-1.500h5c1 0 1.500.5 1.500 1.500v15.500H7z" fill="#f0bd27" /><path d="M2 14c0-1 .5-1.500 1.500-1.500h5c1 0 1.500.5 1.500 1.500v9.500H3.500c-1 0-1.500-.5-1.500-1.500z" fill="#f8d94c" /></Svg></TaskIcon>
      </div>
      <div className="ml-auto flex items-center text-[13px]">
        <Svg w={25} h={26}><path d="M13 8c2 7-2 12-11 9 2 8 15 10 18 2 2-6-2-10-7-11z" fill="#f7ac2e" /><path d="M13 8c2 7-2 12-11 9 6 4 15 3 16-6-1-1-3-2.500-5-3z" fill="#e8791b" /><circle cx="18" cy="7.500" r="6.500" fill="#cb3b25" /><text x="15.500" y="11" fontSize="9.500" fill="#fff" fontFamily="Open Sans, sans-serif">2</text></Svg>
        <T w={29} className="mt-px ml-[7px]">24°C</T>
        <T w={38} className="mt-px ml-[9px]">Limpo</T>
        <Svg w={12} h={8} className="ml-[24px]"><path d="m1 7 5-5.300L11 7" stroke="#222" strokeWidth="1.300" /></Svg>
        <Svg w={14} h={18} className="ml-[12px]"><rect x="1.500" y="4.500" width="9" height="9" rx="2" stroke="#222" strokeWidth="1.300" /><path d="M3 1.500h6M3 16.500h6M11 7.500l2-1.500v6l-2-1.500" stroke="#222" /></Svg>
        <Svg w={17} h={15} className="ml-[9px]"><path d="M6 5.500h10v7H4.500V9" stroke="#222" strokeWidth="1.200" /><path d="M7.500 7h7v4.500h-7z" fill="#222" /><path d="M0 3.500h6v2C6 7 5 8 3 8S0 7 0 5.500zM1.500 1v3M4.500 1v3" fill="#222" stroke="#222" /></Svg>
        <Svg w={15} h={15} className="ml-[8px]"><path d="M1 14C2 7 7 2 14 1M4.500 14C5.500 9 9 5.500 14 4.500M8 14c1-3.500 3-5.500 6-6.500" stroke="#333" strokeWidth="1.100" /><path d="M10 14a5 5 0 0 1 4-4v4z" fill="#333" /></Svg>
        <Svg w={16} h={17} className="ml-[8px]"><circle cx="7" cy="7" r="3" stroke="#666" /><path d="M2 11A6.500 6.500 0 1 1 13 9M7 10v5" stroke="#777" /><circle cx="10.500" cy="11" r="4" fill="#e0464c" /></Svg>
        <div className="ml-[10px] flex flex-col items-center text-[11.500px] leading-[18px]"><T w={27}>17:56</T><T w={58}>28/08/2025</T></div>
        <Svg w={17} h={17} className="mr-[19px] ml-[17px]"><path d="M0 1h17v12h-5v3.500L8.500 13H0z" fill="#111" /><path d="M3.500 4.500h10M3.500 7h10M3.500 9.500h7" stroke="#e1e5e8" strokeWidth=".9" /></Svg>
        <div className="mr-[4px] h-[40px] w-px bg-[#b8bcc2]" />
      </div>
    </div>
  );
}

export default function App() {
  return (
    <div className="flex h-[768px] w-[1366px] flex-col overflow-hidden bg-[#141414] font-['Open_Sans','Noto_Sans',sans-serif]">
      <TitleBar />
      <MenuBar />
      <Ribbon />
      <div className="flex h-[533px] shrink-0">
        <Rail />
        <div className="flex w-[963px] shrink-0 flex-col">
          <Notice />
          <Canvas />
          <PageTabs />
        </div>
        <VizPane />
        <DataPane />
      </div>
      <StatusBar />
      <Taskbar />
    </div>
  );
}
